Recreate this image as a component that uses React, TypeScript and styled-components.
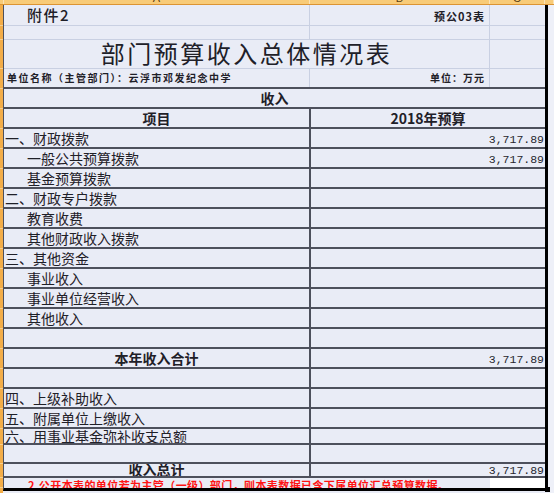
import React from "react";
import styled, { createGlobalStyle } from "styled-components";

const BG = "#e9ecf6";
const GRID = "#c9d0e2";
const RULE = "#4d505c";
const INK = "#1f2028";
const CJK = `"Noto Sans CJK SC", "Noto Sans", sans-serif`;

const GlobalStyle = createGlobalStyle`
  html, body { margin: 0; padding: 0; background: ${BG}; }
  body { font-family: ${CJK}; color: ${INK}; }
  * { box-sizing: border-box; }
`;

const Page = styled.div`
  position: relative;
  width: 554px;
  height: 493px;
  overflow: hidden;
  display: flex;
  flex-direction: column;
  background: ${BG};
`;

/* ---------- column header strip (mostly scrolled off) ---------- */
const ColumnBar = styled.div`
  flex: none;
  height: 5px;
  display: flex;
  background: #f8cb78;
  border-bottom: 1px solid #dc9433;
`;

const ColHead = styled.div<{ $w?: number }>`
  flex: ${(p) => (p.$w ? `0 0 ${p.$w}px` : "1 1 auto")};
  border-right: 1px solid #fbe2b4;
  display: flex;
  justify-content: center;
  align-items: flex-end;
  overflow: hidden;
  font-family: "Liberation Sans", Arial, sans-serif;
  font-size: 11px;
  line-height: 11px;
  color: #5b3f12;
`;

/* ---------- body ---------- */
const Body = styled.div`
  flex: 1;
  display: flex;
  min-height: 0;
`;

const RowHeaders = styled.div`
  flex: 0 0 3px;
  display: flex;
  flex-direction: column;
  background: #f3ad48;
`;

const RowHead = styled.div<{ $h: number }>`
  flex: none;
  height: ${(p) => p.$h}px;
  border-bottom: 1px solid #f8cf8e;
`;

const Frame = styled.div`
  flex: none;
  width: 545px;
  height: 486px;
  display: flex;
  flex-direction: column;
  overflow: hidden;
  border-left: 1px solid ${RULE};
  border-right: 3px solid #000;
  border-bottom: 3px solid #000;
`;

const Filler = styled.div`
  flex: 1;
  background: #eef0f8;
`;

/* ---------- sheet rows above the table ---------- */
const SheetRow = styled.div<{ $h: number; $open?: boolean }>`
  flex: none;
  height: ${(p) => p.$h}px;
  min-height: 0;
  display: grid;
  grid-template-columns: 306px 180px 55px;
  border-bottom: ${(p) => (p.$open ? "none" : `1px solid ${GRID}`)};
`;

const SheetCell = styled.div<{ $span?: number; $justify?: string; $pb?: number }>`
  grid-column: span ${(p) => p.$span ?? 1};
  min-height: 0;
  display: flex;
  align-items: flex-end;
  justify-content: ${(p) => p.$justify ?? "flex-start"};
  padding-bottom: ${(p) => p.$pb ?? 0}px;
  border-right: 1px solid ${GRID};
  white-space: nowrap;
  &:last-child {
    border-right: none;
  }
`;

const AttachLabel = styled.span`
  padding-left: 23px;
  font-size: 15px;
  font-weight: 500;
  letter-spacing: 1.5px;
  line-height: 15px;
`;

const FormCode = styled.span`
  padding-right: 4px;
  font-size: 11px;
  font-weight: 700;
  letter-spacing: 1px;
  line-height: 11px;
`;

const Title = styled.span`
  font-size: 24px;
  font-weight: 400;
  letter-spacing: 2.5px;
  line-height: 24px;
  color: #202028;
`;

const UnitName = styled.span`
  padding-left: 3px;
  font-size: 10px;
  font-weight: 700;
  letter-spacing: 1.5px;
  line-height: 10px;
`;

const UnitLabel = styled.span`
  padding-right: 4px;
  font-size: 10px;
  font-weight: 700;
  letter-spacing: 1px;
  line-height: 10px;
`;

/* ---------- the table ---------- */
const Table = styled.div`
  flex: none;
  display: flex;
  flex-direction: column;
  border-top: 2px solid ${RULE};
`;

const TableRow = styled.div<{ $h?: number }>`
  flex: none;
  height: ${(p) => p.$h ?? 20}px;
  display: grid;
  grid-template-columns: 305px 236px;
  border-bottom: 2px solid ${RULE};
  overflow: hidden;
`;

const HeadCell = styled.div<{ $full?: boolean; $divider?: boolean }>`
  grid-column: ${(p) => (p.$full ? "1 / -1" : "auto")};
  min-height: 0;
  border-left: ${(p) => (p.$divider ? `2px solid ${RULE}` : "none")};
  display: flex;
  justify-content: center;
  align-items: flex-end;
  padding-bottom: 2px;
  font-size: 14px;
  font-weight: 700;
  line-height: 14px;
  white-space: nowrap;
`;

type Fit = "normal" | "short" | "tight";

const LabelCell = styled.div<{ $indent?: boolean; $total?: boolean; $fit: Fit }>`
  min-height: 0;
  display: flex;
  align-items: ${(p) => (p.$fit === "tight" ? "flex-start" : "flex-end")};
  justify-content: ${(p) => (p.$total ? "center" : "flex-start")};
  padding-left: ${(p) => (p.$total ? 0 : p.$indent ? 23 : 1)}px;
  padding-bottom: ${(p) => (p.$fit === "normal" ? 2 : 0)}px;
  font-size: 14px;
  font-weight: ${(p) => (p.$total ? 700 : 400)};
  line-height: ${(p) => (p.$fit === "tight" ? 11 : 14)}px;
  white-space: nowrap;
`;

const ValueCell = styled.div<{ $fit: Fit }>`
  min-height: 0;
  border-left: 2px solid ${RULE};
  display: flex;
  justify-content: flex-end;
  align-items: ${(p) => (p.$fit === "tight" ? "flex-start" : "flex-end")};
  padding: ${(p) => (p.$fit === "tight" ? "1px 1px 0 0" : "0 1px 2px 0")};
  font-family: "Liberation Mono", "DejaVu Sans Mono", monospace;
  font-size: 11.5px;
  line-height: 11px;
  color: #26262e;
`;

const NoteRow = styled.div`
  flex: none;
  height: 10px;
  display: grid;
  grid-template-columns: 486px 55px;
  overflow: hidden;
`;

const NoteText = styled.div`
  min-height: 0;
  height: 10px;
  padding: 5px 0 0 24px;
  overflow: hidden;
  color: #ff1414;
  font-size: 11px;
  font-weight: 700;
  letter-spacing: 0.4px;
  line-height: 5px;
  white-space: nowrap;
`;

const ActiveCell = styled.div`
  background: #ffffff;
`;

const FillHandle = styled.div`
  position: absolute;
  left: 545px;
  top: 487px;
  width: 5px;
  height: 5px;
  background: #000;
`;

type Line = {
  label: string;
  value?: string;
  indent?: boolean;
  total?: boolean;
  h?: number;
  fit?: Fit;
};

const lines: Line[] = [
  { label: "一、财政拨款", value: "3,717.89" },
  { label: "一般公共预算拨款", value: "3,717.89", indent: true },
  { label: "基金预算拨款", indent: true },
  { label: "二、财政专户拨款" },
  { label: "教育收费", indent: true },
  { label: "其他财政收入拨款", indent: true },
  { label: "三、其他资金" },
  { label: "事业收入", indent: true },
  { label: "事业单位经营收入", indent: true },
  { label: "其他收入", indent: true },
  { label: "" },
  { label: "本年收入合计", value: "3,717.89", total: true },
  { label: "" },
  { label: "四、上级补助收入" },
  { label: "五、附属单位上缴收入" },
  { label: "六、用事业基金弥补收支总额", h: 16, fit: "short" },
  { label: "", h: 19 },
  { label: "收入总计", value: "3,717.89", total: true, h: 14, fit: "tight" },
];

const rowHeadHeights = [21, 14, 29, 20, 20, 20, ...lines.map((l) => l.h ?? 20), 10, 20];

export default function App() {
  return (
    <>
      <GlobalStyle />
      <Page>
        <ColumnBar>
          <ColHead $w={4} />
          <ColHead $w={306}>A</ColHead>
          <ColHead $w={180}>B</ColHead>
          <ColHead $w={55}>C</ColHead>
          <ColHead />
        </ColumnBar>
        <Body>
          <RowHeaders>
            {rowHeadHeights.map((h, i) => (
              <RowHead key={i} $h={h} />
            ))}
          </RowHeaders>
          <Frame>
            <SheetRow $h={21}>
              <SheetCell $pb={3}>
                <AttachLabel>附件2</AttachLabel>
              </SheetCell>
              <SheetCell $justify="flex-end" $pb={3}>
                <FormCode>预公03表</FormCode>
              </SheetCell>
              <SheetCell />
            </SheetRow>
            <SheetRow $h={14}>
              <SheetCell />
              <SheetCell />
              <SheetCell />
            </SheetRow>
            <SheetRow $h={29}>
              <SheetCell $span={2} $justify="center" $pb={3}>
                <Title>部门预算收入总体情况表</Title>
              </SheetCell>
              <SheetCell />
            </SheetRow>
            <SheetRow $h={18} $open>
              <SheetCell $pb={4}>
                <UnitName>单位名称（主管部门）：云浮市邓发纪念中学</UnitName>
              </SheetCell>
              <SheetCell $justify="flex-end" $pb={4}>
                <UnitLabel>单位：万元</UnitLabel>
              </SheetCell>
              <SheetCell />
            </SheetRow>

            <Table>
              <TableRow>
                <HeadCell $full>收入</HeadCell>
              </TableRow>
              <TableRow>
                <HeadCell>项目</HeadCell>
                <HeadCell $divider>2018年预算</HeadCell>
              </TableRow>
              {lines.map((l, i) => (
                <TableRow key={i} $h={l.h}>
                  <LabelCell $indent={l.indent} $total={l.total} $fit={l.fit ?? "normal"}>
                    {l.label}
                  </LabelCell>
                  <ValueCell $fit={l.fit ?? "normal"}>{l.value ?? ""}</ValueCell>
                </TableRow>
              ))}
            </Table>

            <NoteRow>
              <NoteText>
                2.公开本表的单位若为主管（一级）部门，则本表数据已含下属单位汇总预算数据。
              </NoteText>
              <ActiveCell />
            </NoteRow>
          </Frame>
          <Filler />
        </Body>
        <FillHandle />
      </Page>
    </>
  );
}
